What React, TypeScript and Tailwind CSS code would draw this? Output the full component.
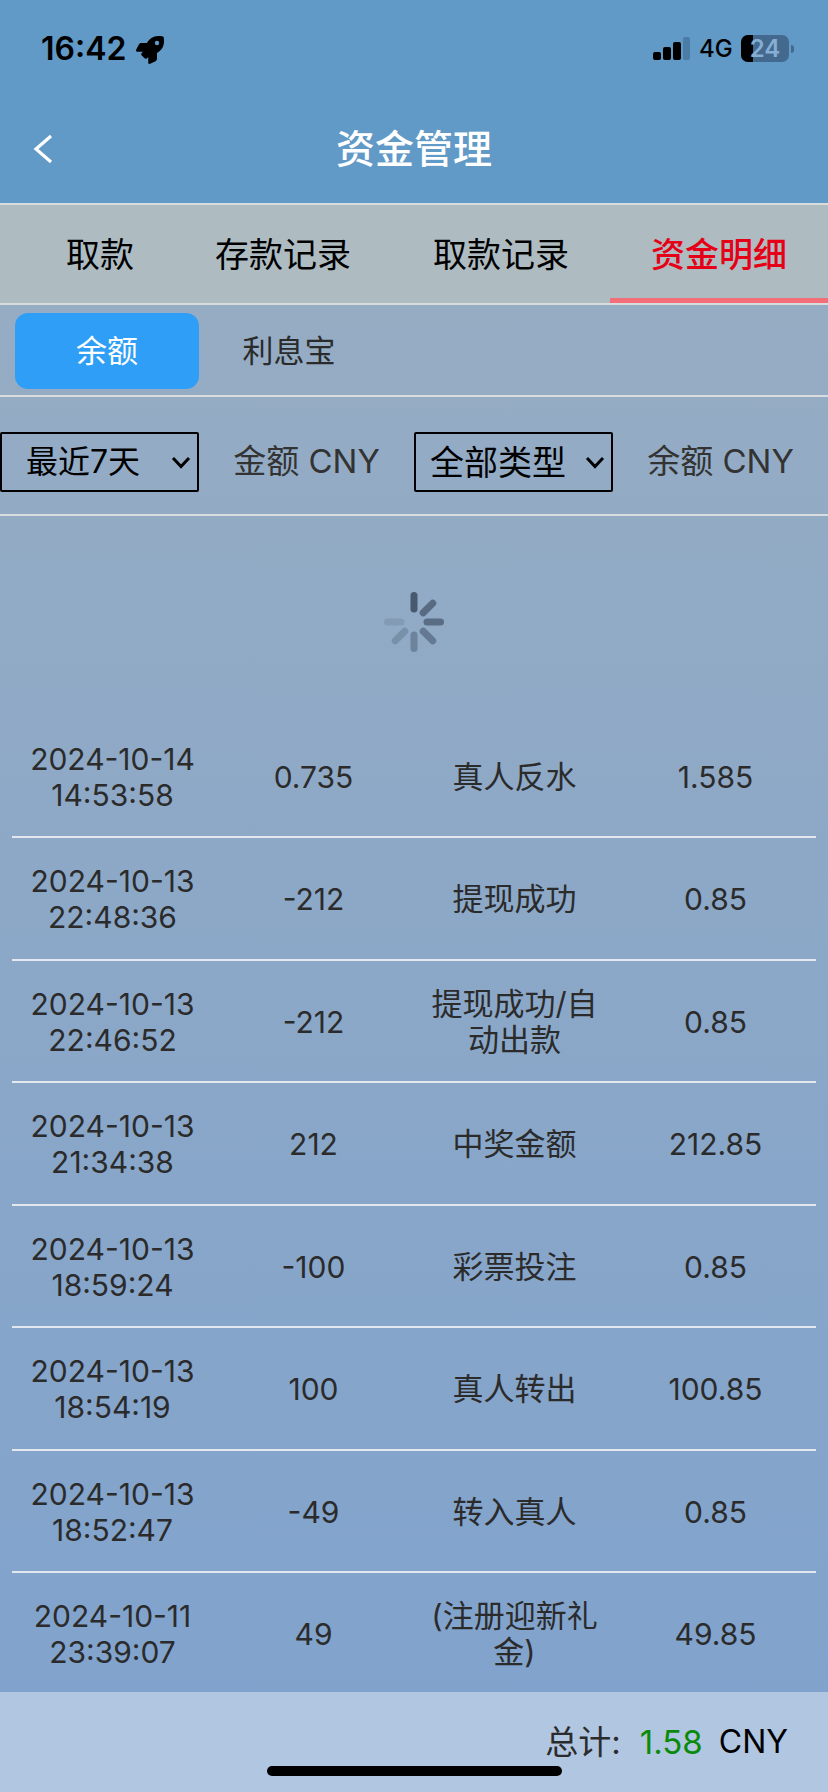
import React from 'react';
import { FaRocket } from 'react-icons/fa';

const rows = [
  { date: '2024-10-14', time: '14:53:58', amount: '0.735', type: '真人反水', balance: '1.585' },
  { date: '2024-10-13', time: '22:48:36', amount: '-212', type: '提现成功', balance: '0.85' },
  { date: '2024-10-13', time: '22:46:52', amount: '-212', type: '提现成功/自动出款', balance: '0.85' },
  { date: '2024-10-13', time: '21:34:38', amount: '212', type: '中奖金额', balance: '212.85' },
  { date: '2024-10-13', time: '18:59:24', amount: '-100', type: '彩票投注', balance: '0.85' },
  { date: '2024-10-13', time: '18:54:19', amount: '100', type: '真人转出', balance: '100.85' },
  { date: '2024-10-13', time: '18:52:47', amount: '-49', type: '转入真人', balance: '0.85' },
  { date: '2024-10-11', time: '23:39:07', amount: '49', type: '(注册迎新礼金)', balance: '49.85' },
];

const spokes = [
  { angle: 0, opacity: 0.8 },
  { angle: 45, opacity: 0.62 },
  { angle: 90, opacity: 0.6 },
  { angle: 135, opacity: 0.48 },
  { angle: 180, opacity: 0.38 },
  { angle: 225, opacity: 0.25 },
  { angle: 270, opacity: 0.14 },
];

function Spinner() {
  return (
    <svg width="60" height="60" viewBox="0 0 60 60">
      {spokes.map((s) => (
        <line
          key={s.angle}
          x1="30"
          y1="3.5"
          x2="30"
          y2="17"
          stroke="#36465a"
          strokeWidth="7"
          strokeLinecap="round"
          opacity={s.opacity}
          transform={`rotate(${s.angle} 30 30)`}
        />
      ))}
    </svg>
  );
}

function Chevron() {
  return (
    <svg className="absolute right-[8px] top-[24px] pointer-events-none" width="20" height="13" viewBox="0 0 20 13">
      <path d="M2 2l8 8.5L18 2" fill="none" stroke="#000" strokeWidth="3" />
    </svg>
  );
}

function FilterSelect({ label, size }: { label: string; size: string }) {
  return (
    <div className="relative w-[199px] h-[60px]">
      <select className={`w-full h-full appearance-none bg-transparent border-2 border-black rounded-[2px] text-black outline-none ${size}`} defaultValue={label}>
        <option>{label}</option>
      </select>
      <Chevron />
    </div>
  );
}

function StatusBar() {
  return (
    <div className="h-[83px] flex justify-between pl-[41px] pr-[34px] pt-[34px]">
      <div className="flex items-start gap-[10px]">
        <span className="text-[32px] leading-[30px] font-semibold text-black">16:42</span>
        <FaRocket size={28} className="text-black mt-[2px]" />
      </div>
      <div className="flex items-end h-[29px]">
        <svg width="38" height="24" viewBox="0 0 38 24" className="mb-[2px]">
          <rect x="0" y="15" width="8" height="8" rx="2" fill="#000" />
          <rect x="10" y="10" width="8" height="13" rx="2" fill="#000" />
          <rect x="20" y="5" width="8" height="18" rx="2" fill="#000" />
          <rect x="30" y="0" width="7" height="23" rx="2" fill="#4a7ca6" />
        </svg>
        <span className="ml-[8px] w-[42px] text-[24px] leading-[29px] font-medium text-black">4G</span>
        <div className="relative w-[48px] h-[27px] rounded-[7px] bg-[#44698f] overflow-hidden mb-[1px]">
          <div className="absolute left-0 top-0 w-[12px] h-full bg-black" />
          <span className="absolute inset-0 flex items-center justify-center text-[24px] leading-none font-semibold text-[#86aed3]">24</span>
        </div>
        <div className="w-[3px] h-[8px] ml-[2px] mb-[10px] rounded-r-[3px] bg-[#44698f]" />
      </div>
    </div>
  );
}

export default function App() {
  return (
    <div className="w-full h-[1792px] flex flex-col overflow-hidden font-[Inter,'Noto_Sans_CJK_SC',sans-serif] bg-gradient-to-b from-[#9aaec1] to-[#7fa2cd]">
      <div className="h-[203px] bg-[#6199c7]">
        <StatusBar />
        <div className="relative h-[120px] flex items-start justify-center pt-[44px]">
          <svg className="absolute left-[32px] top-[51px]" width="23" height="30" viewBox="0 0 23 30">
            <path d="M19 2L4 15l15 13" fill="none" stroke="#fff" strokeWidth="3.2" />
          </svg>
          <span className="text-[39px] leading-[44px] font-medium text-white">资金管理</span>
        </div>
      </div>

      <div className="h-[102px] border-y-2 border-[#d9dcdd] bg-[#aebbc1] grid grid-cols-[174px_218px_218px_218px] text-[34px] text-black">
        <div className="pl-[26px] flex items-center justify-center">取款</div>
        <div className="flex items-center justify-center">存款记录</div>
        <div className="flex items-center justify-center">取款记录</div>
        <div className="flex items-center justify-center font-medium text-[#e60017] border-b-[5px] border-[#f26e78] pt-[5px]">资金明细</div>
      </div>

      <div className="h-[92px] flex items-start pl-[15px] pt-[8px] border-b-2 border-[#d9dcdd] text-[31px]">
        <div className="w-[184px] h-[76px] rounded-[13px] bg-[#2f9ef7] text-white flex items-center justify-center">余额</div>
        <div className="w-[180px] h-[76px] text-[#2b2b2b] flex items-center justify-center">利息宝</div>
      </div>

      <div className="h-[119px] pt-[13px] grid grid-cols-4 items-center border-b-2 border-[#d9dcdd] text-[#333] text-[33px]">
        <FilterSelect label="最近7天" size="text-[32px] pl-[24px]" />
        <div className="text-center pr-[8px]">金额 CNY</div>
        <FilterSelect label="全部类型" size="text-[34px] pl-[14px]" />
        <div className="text-center pr-[8px]">余额 CNY</div>
      </div>

      <div className="h-[199.5px] flex justify-center pt-[76px]">
        <Spinner />
      </div>

      <div className="mx-[12px] text-[#2b2b2b]">
        {rows.map((row, i) => (
          <div key={i} className={`grid grid-cols-4 pt-[2px] items-center text-center text-[30px] leading-[36px] ${i < rows.length - 1 ? 'h-[122.5px] border-b-2 border-[#e3e8ee]' : 'h-[119px]'}`}>
            <div>
              <div>{row.date}</div>
              <div>{row.time}</div>
            </div>
            <div>{row.amount}</div>
            <div className="px-[10px] text-[31px]">{row.type}</div>
            <div>{row.balance}</div>
          </div>
        ))}
      </div>

      <div className="relative mt-auto h-[100px] bg-[#b0c6e1] flex items-start justify-end pr-[40px] pt-[30px] text-[33px] leading-[40px] text-black">
        <span className="text-[#2b2b2b]">总计:</span>
        <span className="ml-[19px] text-[#0a8a0a]">1.58</span>
        <span className="ml-[16px] text-[32px]">CNY</span>
        <div className="absolute left-[267px] top-[74px] w-[295px] h-[10px] rounded-full bg-black" />
      </div>
    </div>
  );
}
